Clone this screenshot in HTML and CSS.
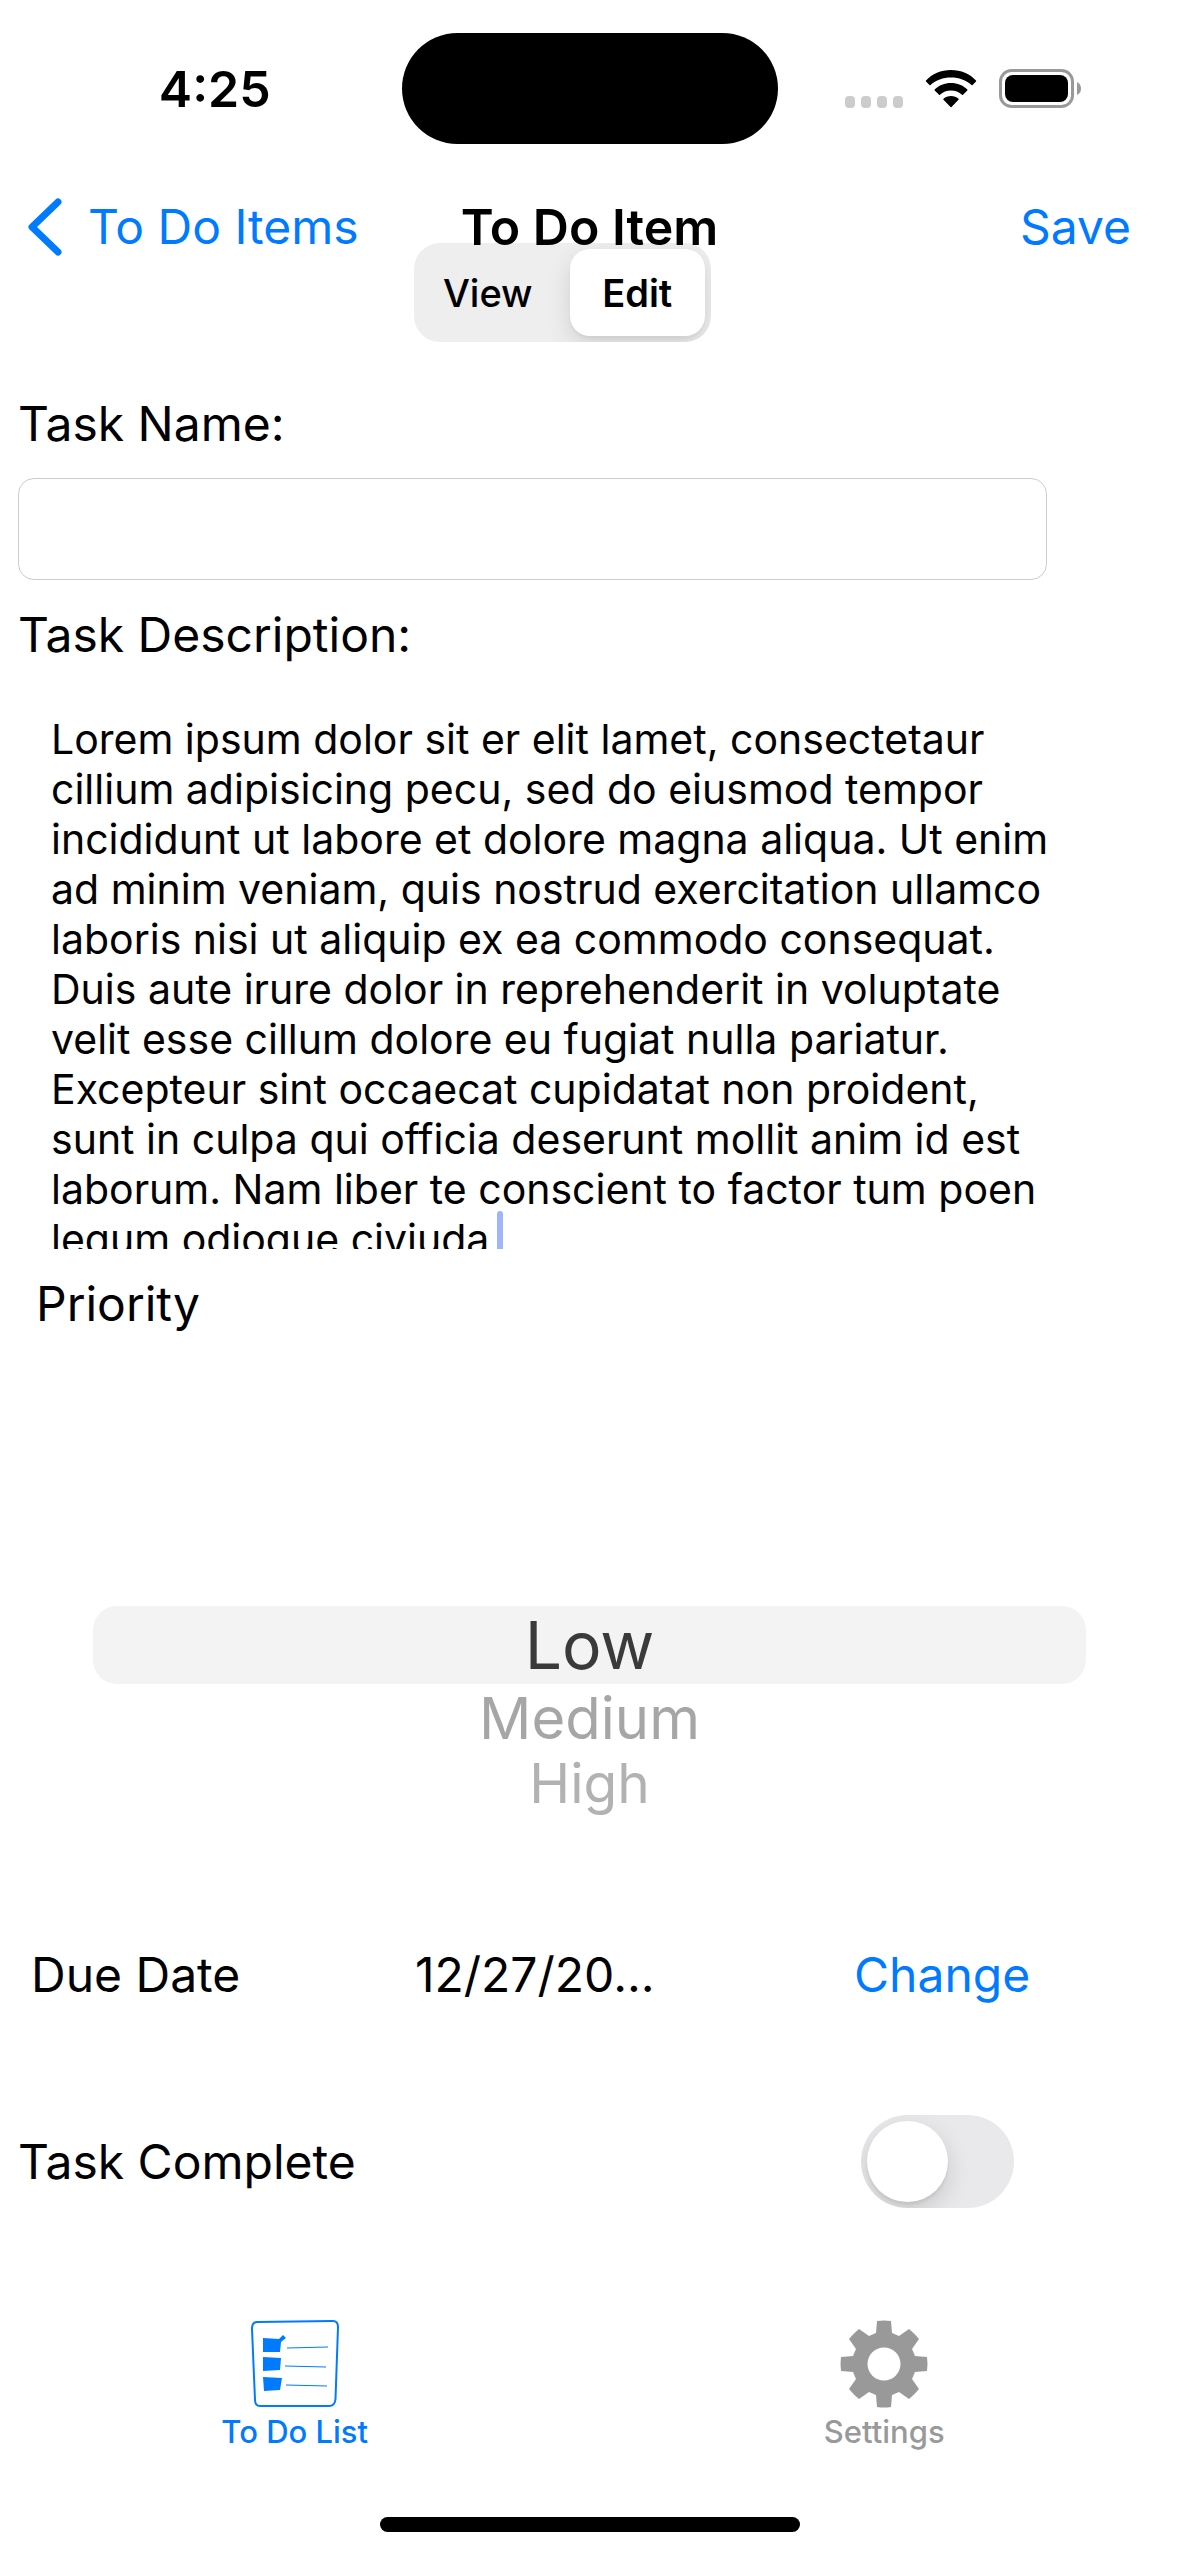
FILE: index.html
```html
<!DOCTYPE html>
<html lang="en">
<head>
  <meta charset="utf-8">
  <meta name="viewport" content="width=device-width, initial-scale=1">
  <title>To Do Item</title>
  <link rel="stylesheet" href="styles.css">
</head>
<body>
  <div class="status-bar">
    <time class="status-time">4:25</time>
    <div class="island"></div>
    <div class="status-icons">
      <svg class="signal" width="58" height="12" viewBox="0 0 58 12" aria-hidden="true">
        <rect x="0" width="10" height="12" rx="4"/><rect x="16" width="10" height="12" rx="4"/>
        <rect x="32" width="10" height="12" rx="4"/><rect x="48" width="10" height="12" rx="4"/>
      </svg>
      <svg class="wifi" width="52" height="38" viewBox="0 0 52 38" aria-hidden="true">
        <path d="M26 0C36 0 45 4 51 10.500Q51.500 11 51 11.500L47.500 15Q47 15.500 46.500 15C41 10 34 7.500 26 7.500S11 10 5.500 15Q5 15.500 4.500 15L1 11.500Q.500 11 1 10.500C7 4 16 0 26 0Z"/>
        <path d="M26 13C32.500 13 38 15.300 42.300 19.500Q42.800 20 42.300 20.500L38 24.700Q37.500 25.200 37 24.700C34 22 30.300 20.500 26 20.500S18 22 15 24.700Q14.500 25.200 14 24.700L9.700 20.500Q9.200 20 9.700 19.500C14 15.300 19.500 13 26 13Z"/>
        <path d="M26 26C29 26 31.500 27 33.500 28.700Q34 29.200 33.500 29.700L26.500 37Q26 37.500 25.500 37L18.500 29.700Q18 29.200 18.500 28.700C20.500 27 23 26 26 26Z"/>
      </svg>
      <svg class="battery" width="82" height="39" viewBox="0 0 82 39" aria-hidden="true">
        <rect x="1.500" y="1.500" width="72" height="36" rx="11" fill="none" stroke="#999" stroke-width="3"/>
        <rect x="6" y="6" width="63" height="27" rx="8"/>
        <path d="M78 13Q82 15 82 19.500T78 26Z" fill="#999"/>
      </svg>
    </div>
  </div>

  <header class="nav-bar">
    <a class="nav-back" href="#items">
      <svg width="35" height="58" viewBox="0 0 35 58" aria-hidden="true">
        <path d="M30 4 4 29 30 54" fill="none" stroke="currentColor" stroke-width="7" stroke-linecap="round" stroke-linejoin="round"/>
      </svg>
      <span>To Do Items</span>
    </a>
    <h1 class="nav-title">To Do Item</h1>
    <button class="nav-save" type="button">Save</button>
  </header>

  <div class="mode-row">
    <div class="segmented" role="radiogroup" aria-label="Mode">
      <label class="segment"><input type="radio" name="mode"><span>View</span></label>
      <label class="segment"><input type="radio" name="mode" checked><span>Edit</span></label>
    </div>
  </div>

  <main class="form">
    <label class="field-label" for="task-name">Task Name:</label>
    <input class="text-field" id="task-name" type="text">

    <label class="field-label" for="task-description">Task Description:</label>
    <div class="description">
      <textarea id="task-description" spellcheck="false">Lorem ipsum dolor sit er elit lamet, consectetaur cillium adipisicing pecu, sed do eiusmod tempor incididunt ut labore et dolore magna aliqua. Ut enim ad minim veniam, quis nostrud exercitation ullamco laboris nisi ut aliquip ex ea commodo consequat. Duis aute irure dolor in reprehenderit in voluptate velit esse cillum dolore eu fugiat nulla pariatur. Excepteur sint occaecat cupidatat non proident, sunt in culpa qui officia deserunt mollit anim id est laborum. Nam liber te conscient to factor tum poen legum odioque civiuda</textarea>
      <span class="caret"></span>
    </div>

    <div class="field-label priority-label" id="priority-label">Priority</div>
    <div class="picker" role="radiogroup" aria-labelledby="priority-label">
      <label class="option"><input type="radio" name="priority" checked><span>Low</span></label>
      <label class="option option-near"><input type="radio" name="priority"><span>Medium</span></label>
      <label class="option option-far"><input type="radio" name="priority"><span>High</span></label>
    </div>

    <div class="due-row">
      <span>Due Date</span>
      <span>12/27/20...</span>
      <button class="change" type="button">Change</button>
    </div>

    <div class="complete-row">
      <label for="task-complete">Task Complete</label>
      <input class="switch" id="task-complete" type="checkbox" role="switch">
    </div>
  </main>

  <nav class="tab-bar">
    <a class="tab tab-active" href="#list">
      <svg width="88" height="88" viewBox="0 0 88 88" aria-hidden="true">
        <path d="M6 2 82 1Q87 1 87 7L84.500 79Q84 86 78 86L9 86Q4 86 4 80L1 9Q1 2 6 2Z" fill="none" stroke="currentColor" stroke-width="2"/>
        <path d="M12 18 28 19 32 15 35 18 30 22 29 32H12ZM12 37 30 38 29 50 12 51ZM12 57 31 58 29 70 13 71Z" fill="currentColor"/>
        <path d="M36 28 77 27M34 46 75 47M35 65 76 66" stroke="currentColor" stroke-width="1"/>
      </svg>
      <span>To Do List</span>
    </a>
    <a class="tab" href="#settings">
      <svg width="88" height="88" viewBox="-44 -44 88 88" aria-hidden="true">
        <path fill="currentColor" fill-rule="evenodd" d="M-7-43Q0-44 7-43L8-31 15-28 25-35Q30-31 35-25L28-15 31-8 43-7Q44 0 43 7L31 8 28 15 35 25Q31 30 25 35L15 28 8 31 7 43Q0 44-7 43L-8 31-15 28-25 35Q-30 31-35 25L-28 15-31 8-43 7Q-44 0-43-7L-31-8-28-15-35-25Q-31-30-25-35L-15-28-8-31ZM16.500 0A16.500 16.500 0 1 0-16.500 0A16.500 16.500 0 1 0 16.500 0Z"/>
      </svg>
      <span>Settings</span>
    </a>
  </nav>
  <div class="home-indicator"></div>
</body>
</html>
```

FILE: styles.css
```css
:root {
  --blue: #007aff;
  --strong-size: 50px;
}

* {
  box-sizing: border-box;
}

body {
  display: flex;
  flex-direction: column;
  min-height: 100vh;
  margin: 0;
  background: #fff;
  color: #000;
  font: 400 48px/60px Inter, "Liberation Sans", sans-serif;
}

a {
  color: var(--blue);
  text-decoration: none;
}

button {
  padding: 0;
  border: 0;
  background: none;
  color: var(--blue);
  font: inherit;
}

/* Status bar */
.status-bar {
  display: grid;
  grid-template-columns: 1fr 376px 1fr;
  align-items: center;
  padding-top: 33px;
}

.status-time {
  padding-left: 28px;
  font-size: var(--strong-size);
  font-weight: 600;
  text-align: center;
}

.island {
  height: 111px;
  border-radius: 56px;
  background: #000;
}

.status-icons {
  display: flex;
  align-items: center;
  gap: 22px;
  padding-left: 67px;
}

.signal {
  margin-top: 26px;
  fill: #ccc;
}

/* Navigation bar, whose title shows above the View / Edit switch */
.nav-bar {
  position: relative;
  z-index: 1;
  display: grid;
  grid-template-columns: 1fr auto 1fr;
  align-items: center;
  padding: 53px 28px 0;
}

.nav-back {
  display: flex;
  align-items: center;
  gap: 25px;
}

.nav-title {
  margin: 0;
  font-size: var(--strong-size);
  font-weight: 600;
}

.nav-save {
  justify-self: end;
  margin-right: 20px;
}

/* View / Edit switch */
.mode-row {
  display: flex;
  justify-content: center;
  margin-top: -14px;
  padding-right: 54px;
}

.segmented {
  display: grid;
  grid-template-columns: 1fr 1fr;
  width: 297px;
  height: 99px;
  padding: 6px;
  border-radius: 26px;
  background: #eee;
  overflow: hidden;
}

.segment {
  display: flex;
  font-size: 38px;
  font-weight: 500;
}

.segment input,
.option input {
  position: absolute;
  opacity: 0;
}

.segment span {
  display: flex;
  flex: 1;
  align-items: center;
  justify-content: center;
  border-radius: 20px;
}

.segment:first-child span {
  margin-right: 7px;
}

.segment:last-child span {
  margin-left: 7px;
}

.segment input:checked + span {
  background: #fff;
  box-shadow: 0 9px 24px rgb(0 0 0 / 12%), 0 3px 3px rgb(0 0 0 / 4%);
  font-weight: 600;
}

/* Form */
.form {
  display: flex;
  flex-direction: column;
  padding: 52px 0 0 18px;
}

.text-field {
  height: 102px;
  margin: 24px 132px 25px 0;
  padding: 0 20px;
  border: 1px solid #ccc;
  border-radius: 16px;
  font: inherit;
}

.description {
  position: relative;
  height: 535px;
  margin: 49px 116px 25px 33px;
  overflow: hidden;
}

.description textarea {
  display: block;
  width: 100%;
  height: 100%;
  padding: 0;
  border: 0;
  outline: 0;
  background: none;
  color: inherit;
  font: inherit;
  font-size: 41px;
  line-height: 50px;
  resize: none;
  overflow: hidden;
}

/* Text cursor after the last word */
.caret {
  position: absolute;
  top: 497px;
  left: 446px;
  width: 6px;
  height: 50px;
  border-radius: 3px;
  background: #a0b4fa;
}

.priority-label {
  padding-left: 18px;
}

.picker {
  display: flex;
  flex-direction: column;
  padding: 272px 93px 131px 75px;
}

.option {
  border-radius: 24px;
  color: #3a3a3a;
  font-size: 66px;
  line-height: 78px;
  text-align: center;
}

.option:has(:checked) {
  background: #f3f3f3;
}

.option-near {
  color: #a6a6a6;
  font-size: 58px;
  line-height: 68px;
}

.option-far {
  color: #b2b2b2;
  font-size: 55px;
  line-height: 62px;
}

.due-row {
  display: grid;
  grid-template-columns: 384px 439px auto;
  justify-content: start;
  padding-left: 13px;
}

.complete-row {
  display: flex;
  align-items: center;
  justify-content: space-between;
  margin-top: 110px;
  padding-right: 165px;
}

.switch {
  display: flex;
  width: 153px;
  height: 93px;
  margin: 0;
  padding: 6px;
  border-radius: 47px;
  background: #e9e9eb;
  appearance: none;
  overflow: hidden;
}

.switch::before {
  width: 81px;
  height: 81px;
  border-radius: 50%;
  background: #fff;
  box-shadow: 0 9px 24px rgb(0 0 0 / 15%), 0 3px 3px rgb(0 0 0 / 6%);
  content: "";
}

.switch:checked {
  justify-content: flex-end;
  background: #34c759;
}

/* Tab bar */
.tab-bar {
  display: grid;
  grid-template-columns: 1fr 1fr;
  margin-top: auto;
}

.tab {
  display: flex;
  flex-direction: column;
  align-items: center;
  gap: 4px;
  color: #999;
  font-size: 31px;
  font-weight: 500;
  line-height: 40px;
}

.tab-active {
  color: var(--blue);
}

.home-indicator {
  width: 420px;
  height: 15px;
  margin: 65px auto 24px;
  border-radius: 8px;
  background: #000;
}
```
